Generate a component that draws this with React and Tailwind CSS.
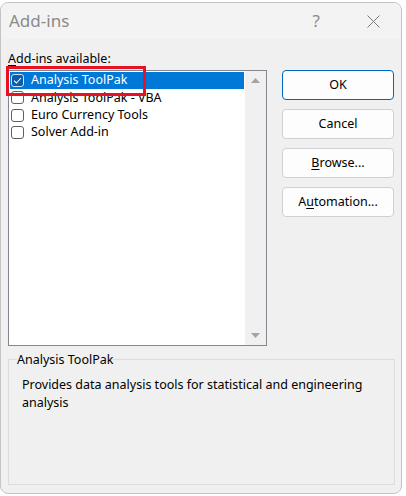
import React from 'react';

const font = { fontFamily: '"Segoe UI", "Noto Sans", sans-serif' };

const addins = [
  { name: 'Analysis ToolPak', checked: true, selected: true },
  { name: 'Analysis ToolPak - VBA', checked: false },
  { name: 'Euro Currency Tools', checked: false },
  { name: 'Solver Add-in', checked: false },
];

const CheckBox = ({ checked, selected }) => (
  <span
    className={
      'flex h-[13px] w-[13px] shrink-0 items-center justify-center rounded-[3px] border ' +
      (selected ? 'border-[#cfe3f7] bg-[#0b5cab]' : 'border-[#5f5f5f] bg-white')
    }
  >
    {checked && (
      <svg width="9" height="7" viewBox="0 0 9 7" fill="none">
        <path d="M1 3.6 L3.4 6 L8 1" stroke="white" strokeWidth="1.1" />
      </svg>
    )}
  </span>
);

const Button = ({ children, primary }) => (
  <button
    className={
      'h-[30px] w-[112px] rounded-[4px] border bg-[#fdfdfd] text-[12.5px] text-black ' +
      (primary ? 'border-[#0067c0]' : 'border-[#d0d0d0]')
    }
  >
    {children}
  </button>
);

const App = () => {
  return (
    <div className="h-[496px] w-[406px] bg-white pt-[2px]" style={font}>
      <div className="h-[492px] w-[402px] overflow-hidden rounded-lg border border-[#c4c4c4] bg-[#f0f0f0]">
        {/* title bar */}
        <div className="flex h-[36px] items-center bg-[#f3f3f3] pl-[8px]">
          <span className="text-[17px] text-[#8a8a8a]">Add-ins</span>
          <span className="ml-auto mr-[47px] text-[17px] text-[#8a8a8a]">?</span>
          <svg className="mr-[21px]" width="13" height="13" viewBox="0 0 13 13">
            <path d="M0.5 0.5 L12.5 12.5 M12.5 0.5 L0.5 12.5" stroke="#7a7a7a" strokeWidth="1" />
          </svg>
        </div>

        {/* body */}
        <div className="px-[7px] pt-[11px]">
          <div className="h-[17px] text-[12.5px] leading-[17px] text-black">
            <span className="underline underline-offset-2">A</span>dd-ins available:
          </div>

          <div className="mt-[3px] flex">
            {/* list box */}
            <div className="relative flex h-[276px] w-[260px] border border-[#828790] bg-white">
              <div className="flex-1 p-[1px]">
                {addins.map((a) => (
                  <div
                    key={a.name}
                    className={
                      'flex h-[17.3px] items-center gap-[7px] pl-[1px] text-[12.5px] ' +
                      (a.selected ? 'bg-[#0078d7] text-white' : 'text-black')
                    }
                  >
                    <CheckBox checked={a.checked} selected={a.selected} />
                    <span>{a.name}</span>
                  </div>
                ))}
              </div>
              <div className="flex w-[21px] flex-col items-center justify-between bg-[#f0f0f0] py-[7px]">
                <svg width="9" height="5" viewBox="0 0 9 5">
                  <path d="M4.5 0 L9 5 L0 5 Z" fill="#a3a3a3" />
                </svg>
                <svg width="9" height="5" viewBox="0 0 9 5">
                  <path d="M0 0 L9 0 L4.5 5 Z" fill="#a3a3a3" />
                </svg>
              </div>
              {/* red highlight */}
              <div className="absolute left-[-3px] top-[-5px] h-[30px] w-[140px] border-[3px] border-[#e81123]" />
            </div>

            {/* buttons */}
            <div className="ml-[15px] flex flex-col gap-[9px]">
              <Button primary>OK</Button>
              <Button>Cancel</Button>
              <Button>
                <span className="underline underline-offset-2">B</span>rowse...
              </Button>
              <Button>
                A<span className="underline underline-offset-2">u</span>tomation...
              </Button>
            </div>
          </div>

          {/* description group */}
          <fieldset className="mt-[5px] h-[134px] w-[387px] border border-[#dcdcdc] px-[13px]">
            <legend className="ml-[-5px] text-[12.5px] leading-[17px] text-black">Analysis ToolPak</legend>
            <p className="mt-[8px] text-[12.5px] leading-[18px] text-black">
              Provides data analysis tools for statistical and engineering analysis
            </p>
          </fieldset>
        </div>
      </div>
    </div>
  );
};

export default App;
